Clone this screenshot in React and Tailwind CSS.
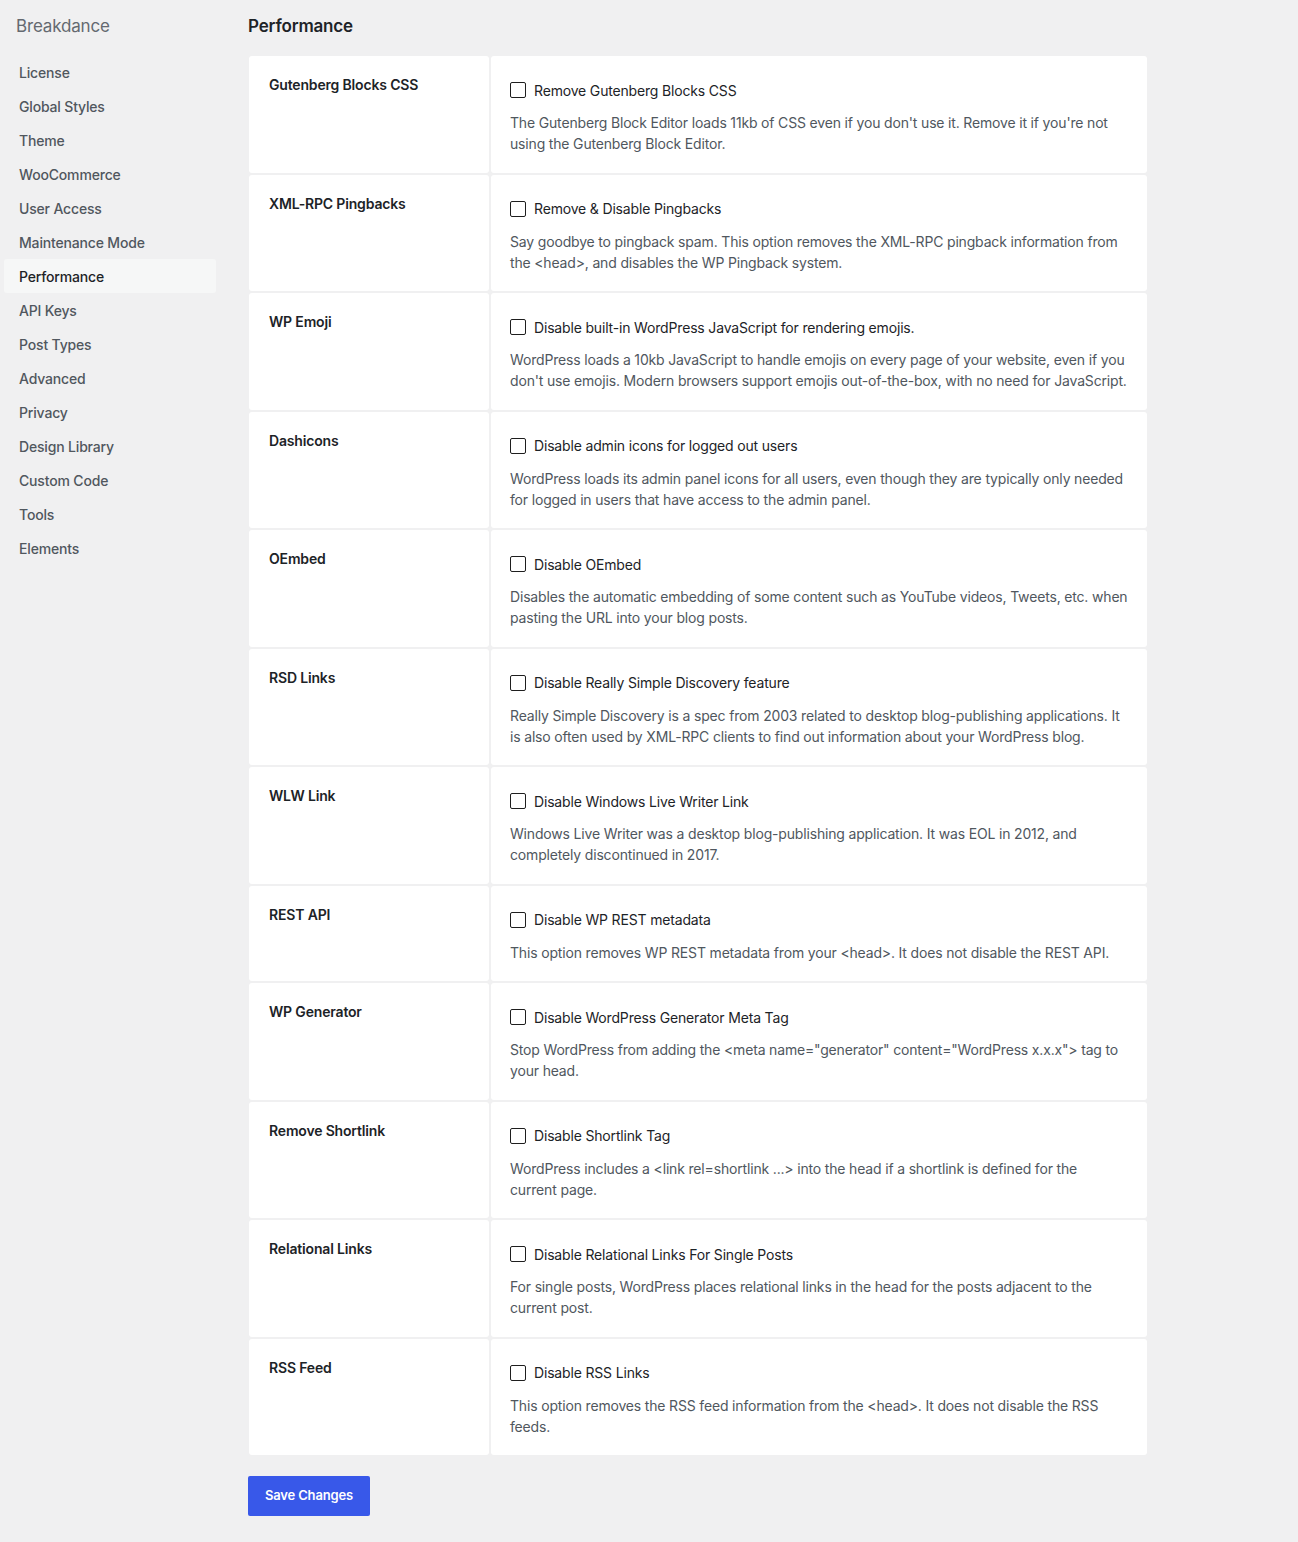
import { useState } from "react";

const navItems = [
  "License",
  "Global Styles",
  "Theme",
  "WooCommerce",
  "User Access",
  "Maintenance Mode",
  "Performance",
  "API Keys",
  "Post Types",
  "Advanced",
  "Privacy",
  "Design Library",
  "Custom Code",
  "Tools",
  "Elements",
];

const settings = [
  {
    title: "Gutenberg Blocks CSS",
    label: "Remove Gutenberg Blocks CSS",
    desc: "The Gutenberg Block Editor loads 11kb of CSS even if you don't use it. Remove it if you're not using the Gutenberg Block Editor.",
  },
  {
    title: "XML-RPC Pingbacks",
    label: "Remove & Disable Pingbacks",
    desc: "Say goodbye to pingback spam. This option removes the XML-RPC pingback information from the <head>, and disables the WP Pingback system.",
  },
  {
    title: "WP Emoji",
    label: "Disable built-in WordPress JavaScript for rendering emojis.",
    desc: "WordPress loads a 10kb JavaScript to handle emojis on every page of your website, even if you don't use emojis. Modern browsers support emojis out-of-the-box, with no need for JavaScript.",
  },
  {
    title: "Dashicons",
    label: "Disable admin icons for logged out users",
    desc: "WordPress loads its admin panel icons for all users, even though they are typically only needed for logged in users that have access to the admin panel.",
  },
  {
    title: "OEmbed",
    label: "Disable OEmbed",
    desc: "Disables the automatic embedding of some content such as YouTube videos, Tweets, etc. when pasting the URL into your blog posts.",
  },
  {
    title: "RSD Links",
    label: "Disable Really Simple Discovery feature",
    desc: "Really Simple Discovery is a spec from 2003 related to desktop blog-publishing applications. It is also often used by XML-RPC clients to find out information about your WordPress blog.",
  },
  {
    title: "WLW Link",
    label: "Disable Windows Live Writer Link",
    desc: "Windows Live Writer was a desktop blog-publishing application. It was EOL in 2012, and completely discontinued in 2017.",
  },
  {
    title: "REST API",
    label: "Disable WP REST metadata",
    desc: "This option removes WP REST metadata from your <head>. It does not disable the REST API.",
  },
  {
    title: "WP Generator",
    label: "Disable WordPress Generator Meta Tag",
    desc: 'Stop WordPress from adding the <meta name="generator" content="WordPress x.x.x"> tag to your head.',
  },
  {
    title: "Remove Shortlink",
    label: "Disable Shortlink Tag",
    desc: "WordPress includes a <link rel=shortlink ...> into the head if a shortlink is defined for the current\u00a0page.",
  },
  {
    title: "Relational Links",
    label: "Disable Relational Links For Single Posts",
    desc: "For single posts, WordPress places relational links in the head for the posts adjacent to the current post.",
  },
  {
    title: "RSS Feed",
    label: "Disable RSS Links",
    desc: "This option removes the RSS feed information from the <head>. It does not disable the RSS feeds.",
  },
];

const SettingRow = ({ item, checked, onToggle }) => (
  <>
    <div className="bg-white rounded-[3px] pl-[20px] pr-4 pt-[19px] text-[14px] leading-[20px] font-semibold text-[#1d2327]">
      {item.title}
    </div>
    <div className="bg-white rounded-[3px] pl-[19px] pr-4 pt-[24px] pb-[18.5px]">
      <label className="flex items-center h-[20px] gap-[8px] text-[14px] text-[#1d2327] cursor-pointer">
        <input
          type="checkbox"
          checked={checked}
          onChange={onToggle}
          className="appearance-none w-[16px] h-[16px] border border-[#1e1e1e] rounded-[2px] bg-white checked:bg-[#3858e9] checked:border-[#3858e9] m-0"
        />
        {item.label}
      </label>
      <p className="mt-[12px] text-[14px] leading-[21px] text-[#50575e]">
        {item.desc}
      </p>
    </div>
  </>
);

export default function App() {
  const [active, setActive] = useState("Performance");
  const [checked, setChecked] = useState({});

  return (
    <div
      className="flex min-h-[1542px] bg-[#f0f0f1] text-[#1d2327] tracking-[-0.17px]"
      style={{ fontFamily: "Inter, 'Noto Sans', sans-serif" }}
    >
      {/* Sidebar */}
      <aside className="w-[216px] shrink-0 pl-[4px]">
        <div className="pl-[12px] pt-[14px] h-[55px] text-[17px] leading-[24px] text-[#646970]">
          Breakdance
        </div>
        <ul>
          {navItems.map((name) => (
            <li
              key={name}
              onClick={() => setActive(name)}
              className={
                name === active
                  ? "h-[34px] flex items-center pl-[15px] rounded-[3px] bg-[#f6f7f7] text-[14px] font-medium text-[#1d2327] cursor-pointer"
                  : "h-[34px] flex items-center pl-[15px] rounded-[3px] text-[14px] font-medium text-[#50575e] cursor-pointer"
              }
            >
              {name}
            </li>
          ))}
        </ul>
      </aside>

      {/* Main content */}
      <main className="pl-[32px] pt-[14px] pb-[25px]">
        <h1 className="text-[17px] leading-[24px] font-semibold text-[#1d2327]">
          Performance
        </h1>
        <div className="mt-[18px] ml-px grid grid-cols-[240px_656px] gap-[2px]">
          {settings.map((item) => (
            <SettingRow
              key={item.title}
              item={item}
              checked={!!checked[item.title]}
              onToggle={() =>
                setChecked((c) => ({ ...c, [item.title]: !c[item.title] }))
              }
            />
          ))}
        </div>
        <button className="mt-[21px] h-[40px] px-[17px] rounded-[2px] bg-[#3858e9] text-white text-[13px] font-semibold">
          Save Changes
        </button>
      </main>
    </div>
  );
}
